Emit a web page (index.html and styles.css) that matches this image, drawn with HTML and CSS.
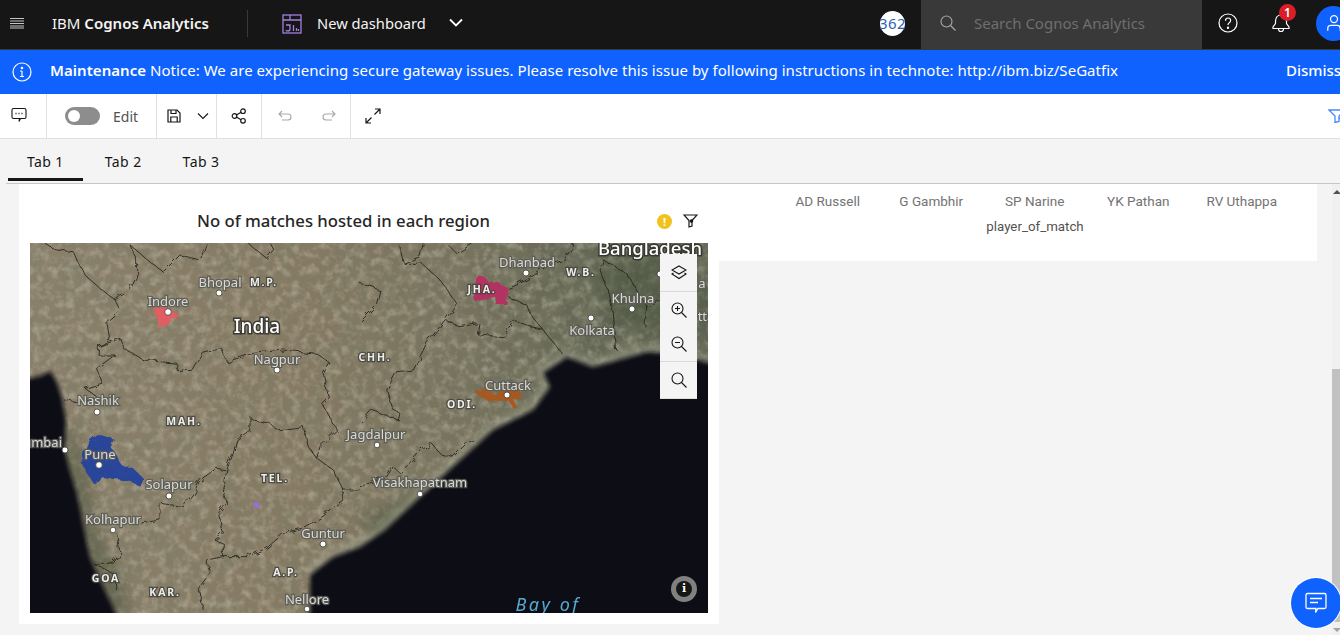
FILE: index.html
```html
<!DOCTYPE html>
<html lang="en">
<head>
  <meta charset="UTF-8" />
  <title>IBM Cognos Analytics</title>
  <link rel="stylesheet" href="styles.css">
</head>
<body>

  <!-- Top Bar -->
  <header class="topbar">
    <button class="menu-btn" aria-label="Menu">
      <svg width="16" height="12" viewBox="0 0 16 12" fill="#c6c6c6"><path d="M1 1h14v1H1zM1 3.500h14v1H1zM1 6h14v1H1zM1 8.500h14v1H1zM1 10.500h14v1H1z"/></svg>
    </button>
    <div class="brand">IBM <strong>Cognos Analytics</strong></div>
    <div class="topbar-divider"></div>
    <svg class="dash-icon" width="20" height="20" viewBox="0 0 20 20" fill="none" stroke="#a47fe0" stroke-width="1.300"><rect x="1" y="1" width="18" height="18"/><path d="M1 6h18M8 1v5M4 11h4v4q0 2-2 2t-2-1M11.500 11v6M14.500 14v3M16.500 15v2"/></svg>
    <div class="dash-name">New dashboard</div>
    <svg class="dash-chevron" width="16" height="10" viewBox="0 0 16 10" fill="none" stroke="#fff" stroke-width="1.800"><path d="M2 1.500l6 6 6-6"/></svg>
    <div class="topbar-right">
      <div class="count-badge">362</div>
      <div class="search-box">
        <svg width="16" height="16" viewBox="0 0 16 16" fill="none" stroke="#a8a8a8" stroke-width="1.100"><circle cx="6.500" cy="6.500" r="5.500"/><path d="M10.500 10.500l5 5"/></svg>
        <span>Search Cognos Analytics</span>
      </div>
      <div class="top-icon help-icon">
        <svg width="20" height="20" viewBox="0 0 20 20" fill="none" stroke="#fff" stroke-width="1.200"><circle cx="10" cy="10" r="9"/><path d="M7.500 7.800q0-2.800 2.600-2.800t2.500 2.500q0 1.500-1.300 2.200t-1.300 2.300"/><circle cx="10" cy="14.800" r=".6" fill="#fff"/></svg>
      </div>
      <div class="top-icon bell-icon">
        <svg width="20" height="20" viewBox="0 0 20 20" fill="none" stroke="#fff" stroke-width="1.200"><path d="M10 2q-5 0-5.500 6v2.500L2 14v1.500h16V14l-2.500-3.500V8Q15 2 10 2zM7.500 15.500v.5q0 2.500 2.500 2.500t2.500-2.500v-.5"/></svg>
        <span class="bell-badge">1</span>
      </div>
      <div class="avatar">
        <svg width="14" height="20" viewBox="0 0 18 22" fill="none" stroke="#fff" stroke-width="1.600"><circle cx="9" cy="6" r="4.500"/><path d="M1 21v-3q0-4 4-4h8q4 0 4 4v3"/></svg>
      </div>
    </div>
  </header>

  <!-- Maintenance Banner -->
  <div class="banner">
    <svg width="20" height="20" viewBox="0 0 20 20" fill="none" stroke="#fff" stroke-width="1.200"><circle cx="10" cy="10" r="9"/><path d="M10 9v5.500M8 9h2M8 14.500h4"/><circle cx="10" cy="6" r=".7" fill="#fff"/></svg>
    <p class="banner-text"><strong>Maintenance</strong> Notice: We are experiencing secure gateway issues. Please resolve this issue by following instructions in technote: http://ibm.biz/SeGatfix</p>
    <span class="banner-dismiss">Dismiss</span>
  </div>

  <!-- Toolbar -->
  <div class="toolbar">
    <div class="tool-group tool-comment">
      <svg width="16" height="16" viewBox="0 0 16 16" fill="none" stroke="#161616" stroke-width="1.100"><path d="M2.500 1.500h11q1.500 0 1.500 1.500v7q0 1.500-1.500 1.500H9.500l-1.500 3 .5-3h-6Q1 11.500 1 10V3q0-1.500 1.500-1.500z"/><path d="M4.500 6.500h1M7.500 6.500h1M10.500 6.500h1" stroke-width="1.400"/></svg>
    </div>
    <div class="tool-group tool-edit">
      <span class="toggle"><span class="toggle-knob"></span></span>
      <span class="edit-label">Edit</span>
    </div>
    <div class="tool-group tool-save">
      <svg width="14" height="14" viewBox="0 0 14 14" fill="none" stroke="#161616" stroke-width="1.200"><path d="M1 1h9l3 3v9H1z"/><path d="M4 1v3.500h5V1M3.800 13V8h6.400v5"/></svg>
      <svg width="12" height="8" viewBox="0 0 12 8" fill="none" stroke="#161616" stroke-width="1.100"><path d="M1 1.500l5 5 5-5"/></svg>
    </div>
    <div class="tool-group tool-share">
      <svg width="16" height="16" viewBox="0 0 16 16" fill="none" stroke="#161616" stroke-width="1.200"><circle cx="3.500" cy="8" r="2.300"/><circle cx="12" cy="3.200" r="2.300"/><circle cx="12" cy="12.800" r="2.300"/><path d="M5.500 6.900l4.500-2.600M5.500 9.100l4.500 2.600"/></svg>
    </div>
    <div class="tool-group tool-history">
      <svg width="14" height="12" viewBox="0 0 14 12" fill="none" stroke="#a8a8a8" stroke-width="1.100"><path d="M4 1L1 4l3 3M1 4h9q3 0 3 3t-3 3H4"/></svg>
      <svg width="14" height="12" viewBox="0 0 14 12" fill="none" stroke="#a8a8a8" stroke-width="1.100"><path d="M10 1l3 3-3 3M13 4H4q-3 0-3 3t3 3h6"/></svg>
    </div>
    <div class="tool-group tool-expand">
      <svg width="16" height="16" viewBox="0 0 16 16" fill="none" stroke="#161616" stroke-width="1.200"><path d="M10 1h5v5M15 1L9.500 6.500M6.500 9.500L1 15M1 10v5h5"/></svg>
    </div>
    <svg class="tool-filter" width="18" height="14" viewBox="0 0 18 14" fill="none" stroke="#4589ff" stroke-width="1.300"><path d="M1 1h16l-6 6v5.500l-4 1V7z"/><path d="M11 10l3-3 3 3"/></svg>
  </div>

  <!-- Tabs -->
  <nav class="tabs">
    <div class="tab active">Tab 1</div>
    <div class="tab">Tab 2</div>
    <div class="tab">Tab 3</div>
  </nav>

  <!-- Dashboard -->
  <main class="workspace">
    <section class="chart-card">
      <div class="chart-head">
        <h2 class="chart-title">No of matches hosted in each region</h2>
        <span class="warn-icon">!</span>
        <svg class="head-filter" width="15" height="14" viewBox="0 0 15 14" fill="none" stroke="#161616" stroke-width="1.200"><path d="M1 1h13L9 6.500V12l-3 1V6.500z"/><circle cx="8.500" cy="7" r="1.200" fill="#161616"/></svg>
      </div>

      <div class="map-wrap">
        <svg class="map" width="678" height="370" viewBox="30 243 678 370">
          <defs>
            <linearGradient id="land" x1="0" y1="0" x2="1" y2="0">
              <stop offset="0" stop-color="#8a806b"/>
              <stop offset=".4" stop-color="#867a63"/>
              <stop offset=".62" stop-color="#78735e"/>
              <stop offset=".82" stop-color="#636754"/>
              <stop offset="1" stop-color="#5b6250"/>
            </linearGradient>
            <filter id="grain" x="0" y="0" width="100%" height="100%">
              <feTurbulence type="fractalNoise" baseFrequency=".05" numOctaves="5" seed="7"/>
              <feColorMatrix values="0 0 0 0 .2  0 0 0 0 .2  0 0 0 0 .13  1.300 0 0 0 -.5"/>
            </filter>
            <filter id="grain-light" x="0" y="0" width="100%" height="100%">
              <feTurbulence type="fractalNoise" baseFrequency=".12" numOctaves="3" seed="21"/>
              <feColorMatrix values="0 0 0 0 .72  0 0 0 0 .68  0 0 0 0 .56  0 .8 0 0 -.34"/>
            </filter>
            <filter id="rough" x="-5%" y="-5%" width="110%" height="110%">
              <feTurbulence type="fractalNoise" baseFrequency=".12" numOctaves="2" seed="4" result="n"/>
              <feDisplacementMap in="SourceGraphic" in2="n" scale="7"/>
            </filter>
            <filter id="soft"><feGaussianBlur stdDeviation="2"/></filter>
            <filter id="softer"><feGaussianBlur stdDeviation="6"/></filter>
          </defs>

          <rect x="30" y="243" width="678" height="370" fill="url(#land)"/>
          <rect x="30" y="243" width="678" height="370" filter="url(#grain)"/>
          <rect x="30" y="243" width="678" height="370" filter="url(#grain-light)"/>

          <!-- greener ghats and forest -->
          <g fill="#4a523d" filter="url(#softer)" opacity=".5">
            <path d="M70 420l12 30 16 80 24 50 10 33h-22L85 540 70 470z"/>
            <path d="M360 520l60-30 20 20-60 40z"/>
            <path d="M590 270l70-20 48 60-30 30-70-20z"/>
          </g>
          <!-- pale shoreline -->
          <path d="M310 575l23-18 27-10 25-17 35-33 40-37 33-30 40-20 17-23-7-14 24-16 26 10 54-15 23 1 38 10" fill="none" stroke="#a5a792" stroke-width="7" filter="url(#softer)"/>

          <!-- sea -->
          <g fill="#0d1016" filter="url(#soft)">
            <path d="M20 380l20-4 10-5 6 9 6 17 4 23-1 30 5 20 7 23 13 64 15 33 12 25v10H20z"/>
            <path d="M310 623v-48l23-18 27-10 25-17 35-33 40-37 33-30 40-20 17-23-7-14 24-16 26 10 54-15 23 1 48 12v258z"/>
          </g>

          <g filter="url(#rough)">
            <!-- region fills -->
            <g transform="translate(0 240) scale(.3333)">
              <path fill="#e85a62" opacity=".92" d="M460 205l30-5 30 15 20 13-25 12-5 10-35 12-5-27z"/>
              <path fill="#24429c" opacity=".94" d="M290 582l30 8 25 10-10 25 10 15 25 40h25l35 35-5 25-45-20-70-5-30 15-20-30-15-30 5-30 15-35z"/>
              <path fill="#9b6bf0" d="M760 790l10-3 8 6-6 12-8-3z"/>
            </g>
            <g transform="translate(360 240) scale(.3333)">
              <path fill="#b5305f" opacity=".95" d="M345 110h30l10 15h25l35 20-5 50h-30l-5-25-60 15-5-15 10-20z"/>
              <path fill="#a9561f" opacity=".95" d="M340 452l35-2 25 8 40-8h43v25l-23 3 12 27-10 3-17-28-50 5-35-15z"/>
            </g>

            <!-- borders, in zoomed reference coordinates -->
            <g class="borders" transform="translate(0 240) scale(.3333)">
              <path d="M135 10l35 20 50 5 15 35 25 40 40 35 45 35 45-30 20-40V60l-20-45"/>
              <path d="M345 180l15 30-40 35 10 55-35 20v25h50l-55 40 15 45-50 15 35 25-50 20-50-10"/>
              <path d="M295 320l65-25 10 30 60 35 100 10 5 25 45-5 30-50 55-15 15 40 80-25 90-10 100 10 40 30-20 30 15 70-20 20 45 80-50 50-10 35 50 35 30 60h50"/>
              <path d="M750 530l10 10 50 10 20 20 80-10 15 60 25 35"/>
              <path d="M750 530v40l-40 30-10 40-20 50-30-5-50 35-20 40-30 40-70-10v50l-60 10"/>
              <path d="M680 690l-10 70 10 30-25 30 15 60-25 20 25 10v40h70l60-25 50-45 55-15 55-30 70-50v-40"/>
              <path d="M350 880l10 60-20 30h-60l60 30 10 50"/>
              <path d="M670 950l-50 10 10 40-35 45 15 65"/>
              <path d="M390 15l70 60 30 20 50-50 60 15 20-50"/>
              <path d="M745 10l55 45 20-25-10-20"/>
            </g>
            <g class="borders" transform="translate(360 240) scale(.3333)">
              <path d="M120 20l10 50h55l55 50 50 70-35 50-55 70-15 30-25 50-50 5-30 55 20 60 20 10-5 20-80-30-35 40"/>
              <path d="M0 130l60 20-10 40-50 50"/>
              <path d="M255 240l45 20 60-10-5 35 75 5 30-50 40 15 45 10 45 55 15 20"/>
              <path d="M445 170l55 25 10 25 35 45"/>
              <path d="M445 145l25-10 30-15 60-40 50-20 30-40v-10"/>
              <path d="M190 10l-10 40-50 20"/>
              <path d="M260 10l30 30 50-30"/>
              <path d="M0 740l80-30 20-30 20 20 65-70 30-20 25 30 40 10 40-40 20-10"/>
              <path d="M730 60l-10 30 25 60 15 70 10 115"/>
              <path d="M730 60l70 40 30 50 30 50-5 60"/>
              <path d="M860 200l40-20 45 10 60-20"/>
            </g>
          </g>

          <!-- city dots -->
          <g class="cities">
            <circle cx="219" cy="293" r="3"/>
            <circle cx="168" cy="312" r="3.300"/>
            <circle cx="277" cy="370" r="3"/>
            <circle cx="97" cy="412" r="3"/>
            <circle cx="65" cy="450" r="3"/>
            <circle cx="99" cy="465" r="3.300"/>
            <circle cx="169" cy="496" r="3"/>
            <circle cx="113" cy="530" r="2.800"/>
            <circle cx="323" cy="544" r="3"/>
            <circle cx="307" cy="609" r="2.800"/>
            <circle cx="377" cy="445" r="2.800"/>
            <circle cx="420" cy="494" r="2.800"/>
            <circle cx="507" cy="395" r="3"/>
            <circle cx="526" cy="273" r="3"/>
            <circle cx="591" cy="318" r="3"/>
            <circle cx="632" cy="309" r="3"/>
            <circle cx="660" cy="274" r="3"/>
          </g>

          <!-- labels -->
          <g class="labels">
            <text x="220" y="287">Bhopal</text>
            <text x="168" y="306">Indore</text>
            <text x="277" y="364">Nagpur</text>
            <text x="98" y="405">Nashik</text>
            <text class="label-end" x="62" y="447">Mumbai</text>
            <text x="100" y="459">Pune</text>
            <text x="169" y="489">Solapur</text>
            <text x="113" y="524">Kolhapur</text>
            <text x="323" y="538">Guntur</text>
            <text x="307" y="604">Nellore</text>
            <text x="376" y="439">Jagdalpur</text>
            <text x="420" y="487">Visakhapatnam</text>
            <text x="508" y="390">Cuttack</text>
            <text x="527" y="267">Dhanbad</text>
            <text x="592" y="335">Kolkata</text>
            <text x="633" y="303">Khulna</text>
            <text x="702" y="288">a</text>
            <text x="706" y="321">tta</text>
            <text x="156" y="628">Shivamogga</text>
            <text class="label-country" x="257" y="333">India</text>
            <text class="label-country label-wide" x="650" y="255">Bangladesh</text>
            <text class="label-state" x="264" y="286">M.P.</text>
            <text class="label-state" x="184" y="425">MAH.</text>
            <text class="label-state" x="275" y="482">TEL.</text>
            <text class="label-state" x="286" y="576">A.P.</text>
            <text class="label-state" x="106" y="582">GOA</text>
            <text class="label-state" x="165" y="596">KAR.</text>
            <text class="label-state" x="375" y="361">CHH.</text>
            <text class="label-state" x="462" y="408">ODI.</text>
            <text class="label-state" x="482" y="293">JHA.</text>
            <text class="label-state" x="581" y="276">W.B.</text>
            <text class="label-sea" x="548" y="611">Bay of</text>
          </g>
        </svg>

        <div class="map-controls">
          <button class="map-btn ruled">
            <svg width="16" height="15" viewBox="0 0 16 15" fill="none" stroke="#161616" stroke-width="1.100"><path d="M8 1l7 4-7 4-7-4zM2.500 8L1 9l7 4.500L15 9l-1.500-1"/></svg>
          </button>
          <button class="map-btn">
            <svg width="16" height="16" viewBox="0 0 16 16" fill="none" stroke="#161616" stroke-width="1.100"><circle cx="6.500" cy="6.500" r="5.500"/><path d="M10.500 10.500l5 5M4 6.500h5M6.500 4v5"/></svg>
          </button>
          <button class="map-btn ruled">
            <svg width="16" height="16" viewBox="0 0 16 16" fill="none" stroke="#161616" stroke-width="1.100"><circle cx="6.500" cy="6.500" r="5.500"/><path d="M10.500 10.500l5 5M4 6.500h5"/></svg>
          </button>
          <button class="map-btn">
            <svg width="16" height="16" viewBox="0 0 16 16" fill="none" stroke="#161616" stroke-width="1.100"><circle cx="6.500" cy="6.500" r="5.500"/><path d="M10.500 10.500l5 5"/></svg>
          </button>
        </div>

        <div class="map-info"><span>i</span></div>
      </div>
    </section>

    <section class="axis-card">
      <div class="axis-names">
        <span>AD Russell</span>
        <span>G Gambhir</span>
        <span>SP Narine</span>
        <span>YK Pathan</span>
        <span>RV Uthappa</span>
      </div>
      <div class="axis-title">player_of_match</div>
    </section>

    <div class="scrollbar">
      <span class="scroll-up"></span>
      <span class="scroll-thumb"></span>
      <span class="scroll-down"></span>
    </div>
  </main>

  <button class="chat-btn" aria-label="Chat">
    <svg width="22" height="22" viewBox="0 0 22 22" fill="none" stroke="#fff" stroke-width="1.300"><path d="M2.500 1.500h17q1.500 0 1.500 1.500v12q0 1.500-1.500 1.500H13l-2.500 4 .5-4H2.500Q1 16.500 1 15V3q0-1.500 1.500-1.500z"/><path d="M5 6.500h12M5 10.500h8"/></svg>
  </button>

</body>
</html>
```

FILE: styles.css
```css
/* Page */
* {
  box-sizing: border-box;
}

body {
  width: 1340px;
  height: 635px;
  margin: 0;
  overflow: hidden;
  display: flex;
  flex-direction: column;
  position: relative;
  background-color: #f4f4f4;
  color: #161616;
  font-family: "Noto Sans", "Open Sans", sans-serif;
}

button {
  border: none;
  padding: 0;
  background: none;
}

svg {
  display: block;
  flex: none;
}

/* Top Bar */
.topbar {
  height: 50px;
  flex: none;
  display: flex;
  align-items: center;
  padding-bottom: 3px;
  overflow: hidden;
  background-color: #161616;
  border-bottom: 1px solid #393939;
  color: #f4f4f4;
}

.menu-btn {
  width: 34px;
  margin-right: 18px;
  display: flex;
  justify-content: center;
}

.brand {
  width: 195px;
  font-size: 15px;
}

.brand strong {
  font-weight: 600;
}

.topbar-divider {
  width: 1px;
  height: 27px;
  margin-right: 34px;
  background-color: #393939;
}

.dash-name {
  margin: 0 22px 0 15px;
  font-size: 14.700px;
}

.dash-icon {
  margin-top: 2px;
}

.topbar-right {
  margin-left: auto;
  margin-bottom: -3px;
  padding-bottom: 3px;
  display: flex;
  align-items: center;
  height: 49px;
  width: 460px;
  flex: none;
  overflow: hidden;
}

.count-badge {
  width: 25px;
  height: 25px;
  margin-right: 16px;
  flex: none;
  display: flex;
  justify-content: center;
  border-radius: 50%;
  background-color: #fff;
  color: #2b62b8;
  font-size: 15px;
  letter-spacing: 0.5px;
  line-height: 25px;
  white-space: nowrap;
}

.search-box {
  width: 281px;
  height: 49px;
  margin-bottom: -3px;
  padding: 0 0 3px 19px;
  flex: none;
  display: flex;
  align-items: center;
  gap: 18px;
  background-color: #393939;
  color: #6f6f6f;
  font-size: 15px;
}

.top-icon {
  flex: none;
  position: relative;
}

.help-icon {
  margin-left: 16px;
}

.bell-icon {
  margin-left: 33px;
}

.bell-badge {
  position: absolute;
  top: -9px;
  left: 8px;
  width: 17px;
  height: 17px;
  border-radius: 50%;
  background-color: #da1e28;
  color: #fff;
  font-size: 12px;
  font-weight: 600;
  line-height: 17px;
  text-align: center;
}

.avatar {
  width: 35px;
  height: 35px;
  margin-left: 25px;
  flex: none;
  display: flex;
  align-items: center;
  justify-content: center;
  border-radius: 50%;
  background-color: #0f62fe;
}

/* Maintenance Banner */
.banner {
  height: 44px;
  flex: none;
  display: flex;
  align-items: center;
  padding-left: 12px;
  position: relative;
  background-color: #0f62fe;
  color: #fff;
  font-size: 15px;
}

.banner-text {
  margin: -5px 0 0 18px;
  white-space: nowrap;
  letter-spacing: 0.04px;
}

.banner-text strong {
  font-weight: 600;
}

.banner-dismiss {
  position: absolute;
  left: 1286px;
  margin-top: -5px;
  white-space: nowrap;
  font-weight: 500;
}

/* Toolbar */
.toolbar {
  height: 45px;
  flex: none;
  display: flex;
  align-items: stretch;
  overflow: hidden;
  background-color: #fff;
  border-bottom: 1px solid #e0e0e0;
}

.tool-group {
  display: flex;
  align-items: center;
  border-right: 1px solid #e0e0e0;
}

.tool-comment {
  width: 47px;
  padding-left: 11px;
  padding-bottom: 2px;
}

.tool-edit {
  width: 110px;
  padding-left: 18px;
  gap: 13px;
}

.toggle {
  width: 35px;
  height: 18px;
  flex: none;
  padding: 3px;
  border-radius: 9px;
  background-color: #8d8d8d;
}

.toggle-knob {
  display: block;
  width: 12px;
  height: 12px;
  border-radius: 50%;
  background-color: #fff;
}

.edit-label {
  font-size: 14px;
  color: #525252;
}

.tool-save {
  width: 60px;
  padding-left: 10px;
  gap: 16px;
}

.tool-share {
  width: 45px;
  padding-left: 14px;
}

.tool-history {
  width: 89px;
  padding-left: 16px;
  gap: 30px;
}

.tool-expand {
  border-right: none;
  padding-left: 14px;
}

.tool-filter {
  margin: 15px -6px 0 auto;
}

/* Tabs */
.tabs {
  height: 45px;
  flex: none;
  display: flex;
  gap: 3px;
  margin-left: 6px;
  padding-left: 2px;
  background-color: #f4f4f4;
  border-bottom: 1px solid #c6c6c6;
}

.tab {
  height: 42px;
  padding: 13px 19px 0;
  font-size: 14px;
  letter-spacing: 0.4px;
}

.tab.active {
  border-bottom: 3px solid #161616;
}

/* Dashboard */
.workspace {
  flex: 1;
  display: flex;
  align-items: flex-start;
  padding-left: 19px;
  position: relative;
  min-height: 0;
}

.chart-card {
  width: 700px;
  height: 440px;
  flex: none;
  padding: 0 11px;
  background-color: #fff;
}

.chart-head {
  height: 59px;
  display: flex;
  align-items: center;
  padding-top: 15px;
}

.chart-title {
  flex: 1;
  margin: -2px 0 0;
  font-size: 16.700px;
  font-weight: 500;
  text-align: center;
  color: #262626;
}

.warn-icon {
  width: 15px;
  height: 15px;
  margin-right: 11px;
  flex: none;
  border-radius: 50%;
  background-color: #f1c21b;
  color: #fff;
  font-size: 11px;
  font-weight: 700;
  line-height: 15px;
  text-align: center;
}

.head-filter {
  margin-right: 10px;
}

.map-wrap {
  width: 678px;
  height: 370px;
  position: relative;
  overflow: hidden;
}

.borders path {
  fill: none;
  stroke: #22211c;
  stroke-width: 3;
  stroke-linejoin: round;
  opacity: 0.85;
}

.cities circle {
  fill: #fff;
  stroke: #3a3a36;
  stroke-width: 0.8;
}

.labels text {
  fill: #d9d9d5;
  stroke: #5b5b55;
  stroke-width: 2.500px;
  paint-order: stroke;
  stroke-opacity: 0.9;
  font-family: "Noto Sans", sans-serif;
  font-size: 13px;
  text-anchor: middle;
}

.labels .label-end {
  text-anchor: end;
}

.labels .label-country {
  font-size: 19px;
  font-weight: 500;
  fill: #fff;
  stroke: #33332e;
  stroke-width: 3px;
}

.labels .label-wide {
  font-size: 18.500px;
}

.labels .label-state {
  font-size: 10.500px;
  font-weight: 700;
  letter-spacing: 1.800px;
  fill: #eeeeea;
  stroke: #45453f;
}

.labels .label-sea {
  font-size: 18px;
  font-style: italic;
  letter-spacing: 2.500px;
  fill: #58a9cf;
  stroke: none;
}

.map-controls {
  position: absolute;
  top: 11px;
  right: 11px;
  width: 37px;
  background-color: #f4f4f4;
  border-bottom: 1px solid #e0e0e0;
}

.map-btn {
  width: 37px;
  height: 35px;
  display: flex;
  align-items: center;
  justify-content: center;
  background-color: #f4f4f4;
}

.map-btn:first-child {
  height: 38px;
}

.map-btn:last-child {
  height: 36px;
}

.map-btn.ruled {
  border-bottom: 1px solid #d9d9d9;
}

.map-info {
  position: absolute;
  right: 11px;
  bottom: 11px;
  width: 26px;
  height: 26px;
  padding: 5px;
  border-radius: 50%;
  background-color: #808080;
}

.map-info span {
  display: block;
  width: 16px;
  height: 16px;
  border-radius: 50%;
  background-color: #161616;
  color: #fff;
  font-family: "DejaVu Serif", serif;
  font-size: 11px;
  font-weight: 700;
  line-height: 16px;
  text-align: center;
}

/* Axis card on the right */
.axis-card {
  width: 598px;
  height: 77px;
  flex: none;
  background-color: #fff;
  font-family: Roboto, sans-serif;
  font-size: 13.300px;
}

.axis-names {
  display: grid;
  grid-template-columns: repeat(5, 103.500px);
  padding: 9px 0 0 57px;
  color: #737373;
  text-align: center;
  font-size: 13.500px;
}

.axis-title {
  margin-top: 10px;
  padding-left: 34px;
  text-align: center;
  color: #525252;
}

/* Scrollbar */
.scrollbar {
  position: absolute;
  top: 0;
  right: 0;
  bottom: 0;
  width: 8px;
  background-color: #f0f0f0;
}

.scroll-up {
  position: absolute;
  top: 6px;
  left: 1px;
  width: 0;
  height: 0;
  border: 4px solid transparent;
  border-top: none;
  border-bottom: 4px solid #505050;
}

.scroll-thumb {
  position: absolute;
  top: 185px;
  left: 0;
  width: 8px;
  height: 253px;
  background-color: #c1c1c1;
}

.scroll-down {
  position: absolute;
  bottom: 3px;
  left: 1px;
  width: 0;
  height: 0;
  border: 4px solid transparent;
  border-bottom: none;
  border-top: 4px solid #a3a3a3;
}

/* Chat button */
.chat-btn {
  position: absolute;
  top: 578px;
  left: 1291px;
  width: 50px;
  height: 50px;
  display: flex;
  align-items: center;
  justify-content: center;
  border-radius: 50%;
  background-color: #0f62fe;
  box-shadow: 0 0 0 1px #fff;
}
```
